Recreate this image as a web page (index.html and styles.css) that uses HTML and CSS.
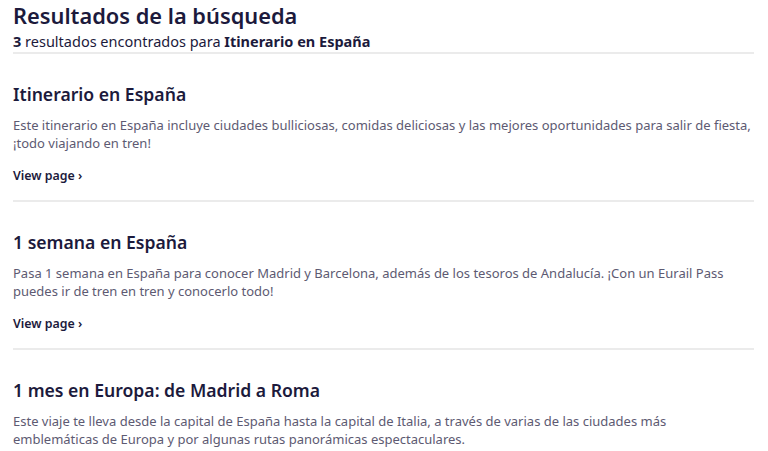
FILE: index.html
```html
<!DOCTYPE html>
<html lang="es">
<head>
  <meta charset="UTF-8">
  <meta name="viewport" content="width=device-width, initial-scale=1.0">
  <title>Resultados de la búsqueda</title>
  <link rel="stylesheet" href="styles.css">
</head>
<body>

  <div class="search-page">
    <div class="search-header">
      <h1>Resultados de la búsqueda</h1>
      <p class="summary"><b>3</b> resultados encontrados para <b>Itinerario en España</b></p>
    </div>

    <div class="result">
      <h2>Itinerario en España</h2>
      <p>Este itinerario en España incluye ciudades bulliciosas, comidas deliciosas y las mejores oportunidades para salir de fiesta, ¡todo viajando en tren!</p>
      <a href="#" class="view-link">View page ›</a>
    </div>

    <div class="result">
      <h2>1 semana en España</h2>
      <p>Pasa 1 semana en España para conocer Madrid y Barcelona, además de los tesoros de Andalucía. ¡Con un Eurail Pass puedes ir de tren en tren y conocerlo todo!</p>
      <a href="#" class="view-link">View page ›</a>
    </div>

    <div class="result">
      <h2>1 mes en Europa: de Madrid a Roma</h2>
      <p>Este viaje te lleva desde la capital de España hasta la capital de Italia, a través de varias de las ciudades más emblemáticas de Europa y por algunas rutas panorámicas espectaculares.</p>
    </div>
  </div>

</body>
</html>
```
FILE: styles.css
```css
* {
  margin: 0;
  padding: 0;
  box-sizing: border-box;
}

body {
  font-family: 'Noto Sans', sans-serif;
  background-color: #fff;
  color: #1c1a3c;
}

.search-page {
  padding: 2px 14px 0 13px;
}

.search-header {
  padding-bottom: 1px;
  border-bottom: 2px solid #ebebeb;
}

.search-header h1 {
  font-size: 21.8px;
  font-weight: 600;
  line-height: 28px;
}

.summary {
  font-size: 14.5px;
  line-height: 20px;
  margin-top: 1px;
}

.summary b {
  font-weight: 700;
}

.result {
  padding: 28px 0 15px;
  border-bottom: 2px solid #ebebeb;
}

.result:last-child {
  border-bottom: none;
}

.result h2 {
  font-size: 17.6px;
  font-weight: 600;
  line-height: 24px;
}

.result p {
  font-size: 13px;
  line-height: 18px;
  color: #5d5a72;
  margin-top: 10px;
}

.view-link {
  display: inline-block;
  margin-top: 15px;
  font-size: 12.4px;
  font-weight: 600;
  line-height: 18px;
  color: #1c1a3c;
  text-decoration: none;
}
```
